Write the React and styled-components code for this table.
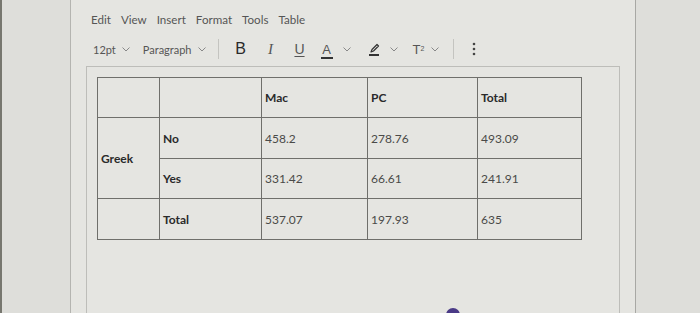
import React from "react";
import styled, { createGlobalStyle } from "styled-components";

const GlobalStyle = createGlobalStyle`
  html, body {
    margin: 0;
    padding: 0;
    background: #dfdfdb;
  }
  body {
    font-family: Lato, "Open Sans", "Liberation Sans", sans-serif;
  }
`;

const Screen = styled.div`
  width: 700px;
  height: 313px;
  overflow: hidden;
  box-sizing: border-box;
  display: flex;
  background: #dededa;
  border-left: 2px solid #77776f;
  padding-left: 68px;
`;

const Editor = styled.div`
  width: 566px;
  height: 100%;
  box-sizing: border-box;
  background: #e5e5e1;
  border-left: 1px solid #b4b4b0;
  border-right: 1px solid #a8a8a4;
  padding: 10px 15px 0 15px;
  display: flex;
  flex-direction: column;
`;

const MenuBar = styled.div`
  display: flex;
  gap: 10px;
  padding-left: 5px;
  height: 18px;
  align-items: center;
  font-size: 11.6px;
  color: #555;
`;

const ToolBar = styled.div`
  display: flex;
  align-items: center;
  height: 22px;
  margin-top: 10px;
  padding-left: 7px;
  color: #555;
  font-size: 11px;
`;

const Drop = styled.div`
  display: flex;
  align-items: center;
  gap: ${(p) => p.$gap || 6}px;
  margin-right: ${(p) => p.$mr || 0}px;
`;

const Sep = styled.div`
  width: 1px;
  height: 20px;
  background: #c4c4c0;
  margin: 0 ${(p) => p.$r || 14}px 0 ${(p) => p.$l || 14}px;
`;

const Glyph = styled.span`
  display: inline-flex;
  align-items: center;
  justify-content: center;
  width: 14px;
  font-size: ${(p) => p.$size || 15}px;
  color: ${(p) => p.$color || "#444"};
  font-weight: ${(p) => p.$weight || 400};
  font-style: ${(p) => (p.$italic ? "italic" : "normal")};
  font-family: ${(p) => p.$serif ? '"Liberation Serif", serif' : '"Liberation Sans", Arial, sans-serif'};
  text-decoration: ${(p) => (p.$under ? "underline" : "none")};
  text-underline-offset: 2px;
  margin-right: ${(p) => p.$mr || 0}px;
  line-height: 1;
  position: relative;
`;

const Bar = styled.span`
  position: absolute;
  left: 1px;
  right: 1px;
  bottom: -3px;
  height: 2px;
  background: #333;
`;

const Sup = styled.sup`
  font-size: 7px;
  line-height: 0;
`;

const ContentBox = styled.div`
  margin-top: 6px;
  flex: 1;
  border: 1px solid #bdbdb9;
  border-bottom: none;
  padding: 10px 0 0 10px;
  box-sizing: border-box;
  position: relative;
`;

const Grid = styled.table`
  border-collapse: collapse;
  table-layout: fixed;
  width: 484px;
  font-family: Lato, "Open Sans", sans-serif;
  font-size: 12px;
`;

const Cell = styled.td`
  border: 1px solid #6f6f6b;
  height: ${(p) => p.$h || 39}px;
  padding: 0 3px;
  vertical-align: middle;
  color: ${(p) => (p.$label ? "#2a2a2a" : "#4a4a48")};
  font-weight: ${(p) => (p.$label ? 700 : 400)};
`;

const Purple = styled.div`
  position: absolute;
  left: 359px;
  bottom: -9px;
  width: 14px;
  height: 14px;
  border-radius: 50%;
  background: #4a3a86;
`;

const Chevron = () => (
  <svg width="8" height="5" viewBox="0 0 8 5">
    <path d="M0.5 0.5 L4 4 L7.5 0.5" fill="none" stroke="#888" strokeWidth="1" />
  </svg>
);

const Pen = () => (
  <svg width="13" height="13" viewBox="0 0 13 13">
    <path d="M3 9 L4 6.5 L9 1.5 L10.5 3 L5.5 8 Z" fill="none" stroke="#333" strokeWidth="1.2" strokeLinejoin="round" />
    <rect x="1" y="11" width="10" height="2" fill="#333" />
  </svg>
);

const Dots = () => (
  <svg width="4" height="14" viewBox="0 0 4 14">
    <circle cx="2" cy="2" r="1.3" fill="#444" />
    <circle cx="2" cy="7" r="1.3" fill="#444" />
    <circle cx="2" cy="12" r="1.3" fill="#444" />
  </svg>
);

const menus = ["Edit", "View", "Insert", "Format", "Tools", "Table"];

export default function App() {
  return (
    <>
      <GlobalStyle />
      <Screen>
        <Editor>
          <MenuBar>
            {menus.map((m) => (
              <span key={m}>{m}</span>
            ))}
          </MenuBar>
          <ToolBar>
            <Drop $mr={13}>
              <span>12pt</span>
              <Chevron />
            </Drop>
            <Drop>
              <span>Paragraph</span>
              <Chevron />
            </Drop>
            <Sep $l={12} $r={15} />
            <Glyph $size={16} $color="#2a2a2a" $mr={16}>B</Glyph>
            <Glyph $size={15} $italic $serif $color="#555" $mr={15}>I</Glyph>
            <Glyph $size={14} $under $color="#555" $mr={13}>U</Glyph>
            <Drop $gap={9} $mr={17}>
              <Glyph $size={13} $color="#555">
                A
                <Bar />
              </Glyph>
              <Chevron />
            </Drop>
            <Drop $gap={9} $mr={14}>
              <Pen />
              <Chevron />
            </Drop>
            <Drop $gap={5}>
              <Glyph $size={13} $color="#555">
                T<Sup>2</Sup>
              </Glyph>
              <Chevron />
            </Drop>
            <Sep $l={14} $r={18} />
            <Dots />
          </ToolBar>
          <ContentBox>
            <Grid>
              <colgroup>
                <col style={{ width: 62 }} />
                <col style={{ width: 102 }} />
                <col style={{ width: 106 }} />
                <col style={{ width: 110 }} />
                <col style={{ width: 104 }} />
              </colgroup>
              <tbody>
                <tr>
                  <Cell />
                  <Cell />
                  <Cell $label>Mac</Cell>
                  <Cell $label>PC</Cell>
                  <Cell $label>Total</Cell>
                </tr>
                <tr>
                  <Cell rowSpan={2} $label>
                    Greek
                  </Cell>
                  <Cell $h={40} $label>No</Cell>
                  <Cell $h={40}>458.2</Cell>
                  <Cell $h={40}>278.76</Cell>
                  <Cell $h={40}>493.09</Cell>
                </tr>
                <tr>
                  <Cell $label>Yes</Cell>
                  <Cell>331.42</Cell>
                  <Cell>66.61</Cell>
                  <Cell>241.91</Cell>
                </tr>
                <tr>
                  <Cell $h={40} />
                  <Cell $h={40} $label>Total</Cell>
                  <Cell $h={40}>537.07</Cell>
                  <Cell $h={40}>197.93</Cell>
                  <Cell $h={40}>635</Cell>
                </tr>
              </tbody>
            </Grid>
            <Purple />
          </ContentBox>
        </Editor>
      </Screen>
    </>
  );
}
